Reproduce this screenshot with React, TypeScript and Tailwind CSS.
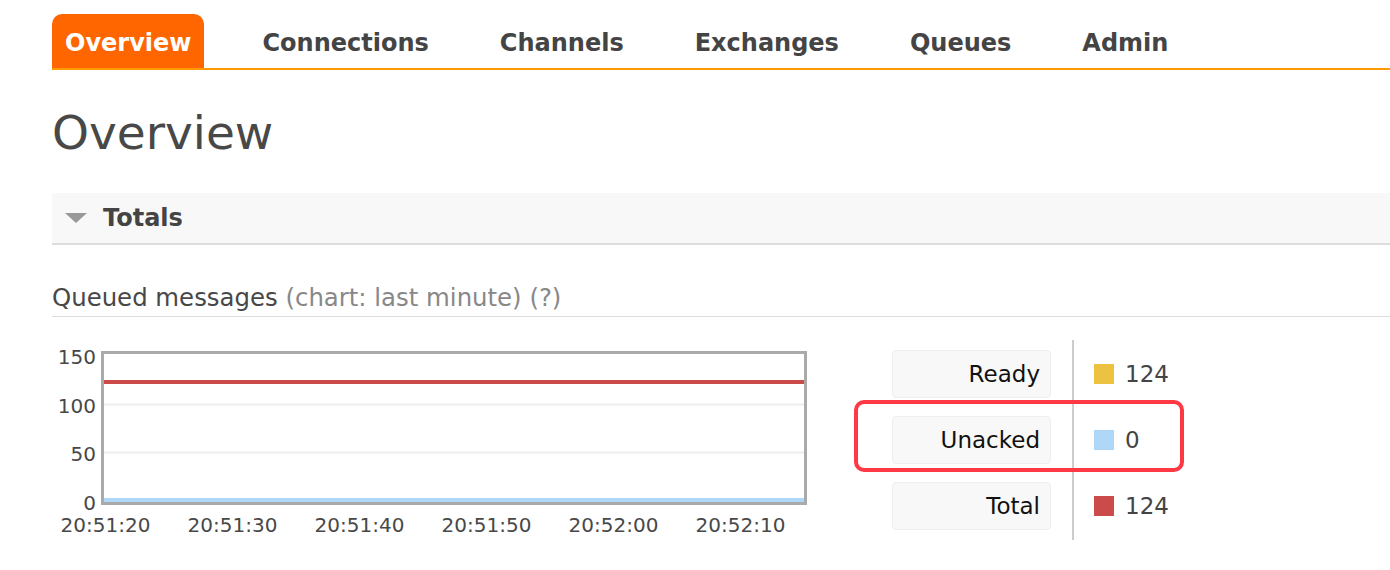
import * as React from "react";

const tabs = ["Overview", "Connections", "Channels", "Exchanges", "Queues", "Admin"];

const yTicks = ["150", "100", "50", "0"];
const xTicks = ["20:51:20", "20:51:30", "20:51:40", "20:51:50", "20:52:00", "20:52:10"];

const legend = [
    { label: "Ready", color: "bg-[#edc240]", value: "124" },
    { label: "Unacked", color: "bg-[#afd8f8]", value: "0" },
    { label: "Total", color: "bg-[#cb4b4b]", value: "124" },
];

const Chart = () => {
    return (
        <div className="flex flex-col">
            <div className="flex">
                <div className="flex flex-col justify-between items-end w-[44px] h-[162px] text-[20px] leading-[16px] text-[#484848] mr-[5px] -mt-[2px]">
                    {yTicks.map((t) => (
                        <span key={t}>{t}</span>
                    ))}
                </div>
                <div className="w-[706px] h-[154px] border-[3px] border-[#aaa] bg-white">
                    <svg width="700" height="148" viewBox="0 0 700 148" className="block">
                        <line x1="0" y1="50.5" x2="700" y2="50.5" stroke="#eee" strokeWidth="2" />
                        <line x1="0" y1="98.5" x2="700" y2="98.5" stroke="#eee" strokeWidth="2" />
                        <line x1="0" y1="28" x2="700" y2="28" stroke="#edc240" strokeWidth="4" />
                        <line x1="0" y1="28" x2="700" y2="28" stroke="#cb4b4b" strokeWidth="4" />
                        <line x1="0" y1="146" x2="700" y2="146" stroke="#afd8f8" strokeWidth="4" />
                    </svg>
                </div>
            </div>
            <div className="flex ml-[-10px] mt-[4px]">
                {xTicks.map((t) => (
                    <span key={t} className="w-[127px] text-center text-[20px] leading-[20px] text-[#484848]">
                        {t}
                    </span>
                ))}
            </div>
        </div>
    );
};

const App = () => {
    return (
        <div className="bg-white min-h-screen w-[1390px] h-[570px] overflow-hidden font-['DejaVu_Sans',Verdana,sans-serif] text-[#484848]">
            <div className="pl-[52px] pt-[14px]">
                <ul className="flex items-end border-b-2 border-[#ff9900]">
                    {tabs.map((t, i) => (
                        <li
                            key={t}
                            className={`h-[54px] flex items-center pt-[3px] px-[13px] text-[24px] font-bold ${
                                i == 0 ? "bg-[#ff6600] text-white rounded-t-[10px]" : "text-[#444] ml-[45px]"
                            }`}
                        >
                            {t}
                        </li>
                    ))}
                </ul>

                <h1 className="text-[47px] leading-[56px] mt-[35px] text-[#484848]">Overview</h1>

                <div className="mt-[32px] h-[52px] bg-[#f8f8f8] border-b-2 border-[#ddd] flex items-center">
                    <span className="ml-[13px] mr-[16px] w-0 h-0 border-l-[11px] border-r-[11px] border-t-[10px] border-l-transparent border-r-transparent border-t-[#999]" />
                    <span className="text-[24px] font-bold text-[#444]">Totals</span>
                </div>

                <div className="mt-[38px] pb-[3px] border-b border-[#ddd] text-[24.4px] leading-[30px]">
                    <span className="text-[#484848]">Queued messages</span>{" "}
                    <span className="text-[#888]">(chart: last minute) (?)</span>
                </div>

                <div className="flex mt-[34px]">
                    <Chart />
                    <div className="relative flex ml-[85px] -mt-[11px]">
                        <div className="flex flex-col gap-[18px] pt-[10px] pr-[21px] border-r-2 border-[#ccc] pb-[10px]">
                            {legend.map((l) => (
                                <div
                                    key={l.label}
                                    className="w-[159px] h-[48px] bg-[#f8f8f8] border border-[#eee] rounded-[4px] flex items-center justify-end pr-[10px] text-[23px] text-[#111]"
                                >
                                    {l.label}
                                </div>
                            ))}
                        </div>
                        <div className="flex flex-col gap-[18px] pt-[10px] pl-[20px]">
                            {legend.map((l) => (
                                <div key={l.label} className="h-[48px] flex items-center text-[23px] text-[#444]">
                                    <span className={`w-[20px] h-[20px] mr-[11px] ${l.color}`} />
                                    {l.value}
                                </div>
                            ))}
                        </div>
                        <div className="absolute left-[-38px] top-[60px] w-[330px] h-[72px] border-[4px] border-[#ff3846] rounded-[10px]" />
                    </div>
                </div>
            </div>
        </div>
    );
};

export default App;
